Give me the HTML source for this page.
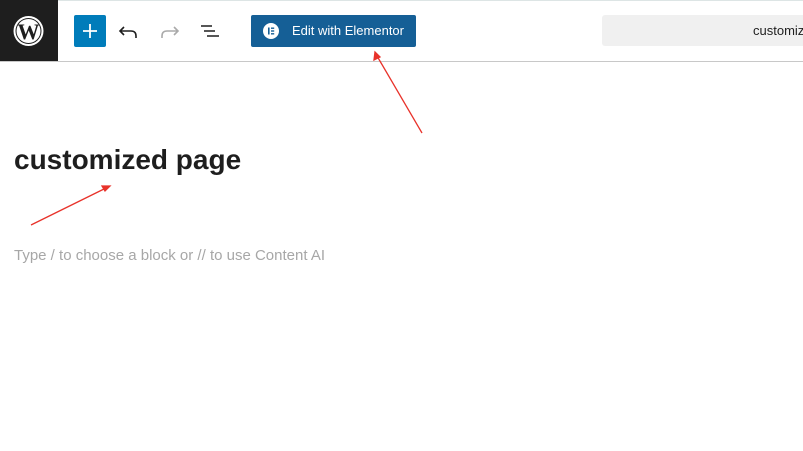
<!DOCTYPE html><html><head><style>
body{margin:0;width:803px;height:451px;overflow:hidden;background:#fff;font-family:"Liberation Sans",sans-serif;position:relative}
.top{position:absolute;left:0;top:0;width:803px;height:1px;background:#dde5e5}
.hdr{position:absolute;left:0;top:0;width:803px;height:61px;border-bottom:1px solid #c8c8c8}
.logo{position:absolute;left:0;top:0;width:58px;height:61px;background:#1e1e1e}
.plus{position:absolute;left:74px;top:15px;width:32px;height:32px;background:#007cba;border-radius:2px}
.ele{position:absolute;left:251px;top:15px;width:165px;height:32px;background:#155f96;border-radius:2px;color:#fff;font-size:13px;line-height:32px;white-space:nowrap}
.srch{position:absolute;left:602px;top:15px;width:210px;height:31px;background:#f0f0f0;border-radius:3px;font-size:13px;line-height:31px;color:#1e1e1e;white-space:nowrap;overflow:hidden}
h1{position:absolute;left:14px;top:144px;margin:0;font-size:28px;font-weight:bold;color:#1e1e1e;white-space:nowrap}
.ph{position:absolute;left:14px;top:247px;font-size:15px;color:#a7a7a7}
</style></head><body>
<div class="hdr"></div><div class="top"></div>
<div class="logo"><svg width="58" height="61" viewBox="0 0 58 61"><circle cx="28.5" cy="31" r="15" fill="#fff"/><circle cx="28.5" cy="31" r="13" fill="#1e1e1e"/><circle cx="28.5" cy="31" r="12" fill="#fff"/><text x="28.5" y="39" text-anchor="middle" font-family="Liberation Serif" font-weight="bold" font-size="22" fill="#1e1e1e">W</text></svg></div>
<div class="plus"><svg width="32" height="32"><path d="M16 9 V23 M9 16 H23" stroke="#fff" stroke-width="1.8"/></svg></div>
<svg style="position:absolute;left:118px;top:18px" width="110" height="28" viewBox="0 0 110 28"><path d="M6 9 L2 13 L6 17 M2 13 H13 Q18 13 18 18 V20" fill="none" stroke="#1e1e1e" stroke-width="1.6"/><path d="M56 9 L60 13 L56 17 M60 13 H49 Q44 13 44 18 V20" fill="none" stroke="#aaa" stroke-width="1.6"/><path d="M83 8 H94 M86 13 H97 M89 18 H101" stroke="#1e1e1e" stroke-width="1.6"/></svg>
<div class="ele"><svg style="position:absolute;left:12px;top:8px" width="16" height="16"><circle cx="8" cy="8" r="8" fill="#fff"/><rect x="5" y="4.5" width="1.6" height="7" fill="#155f96"/><rect x="8" y="4.5" width="3.2" height="1.4" fill="#155f96"/><rect x="8" y="7.3" width="3.2" height="1.4" fill="#155f96"/><rect x="8" y="10.1" width="3.2" height="1.4" fill="#155f96"/></svg><span style="position:absolute;left:41px">Edit with Elementor</span></div>
<div class="srch"><span style="position:absolute;left:151px">customized page</span></div>
<h1>customized page</h1>
<div class="ph">Type / to choose a block or // to use Content AI</div>
<svg style="position:absolute;left:0;top:0" width="803" height="451"><g stroke="#e8322a" stroke-width="1.3" fill="#e8322a"><line x1="422" y1="133" x2="377" y2="56"/><path d="M375 52 L374 60 L380 57Z"/><line x1="31" y1="225" x2="106" y2="188"/><path d="M110 186 L102 186 L105 191Z"/></g></svg>
</body></html>
